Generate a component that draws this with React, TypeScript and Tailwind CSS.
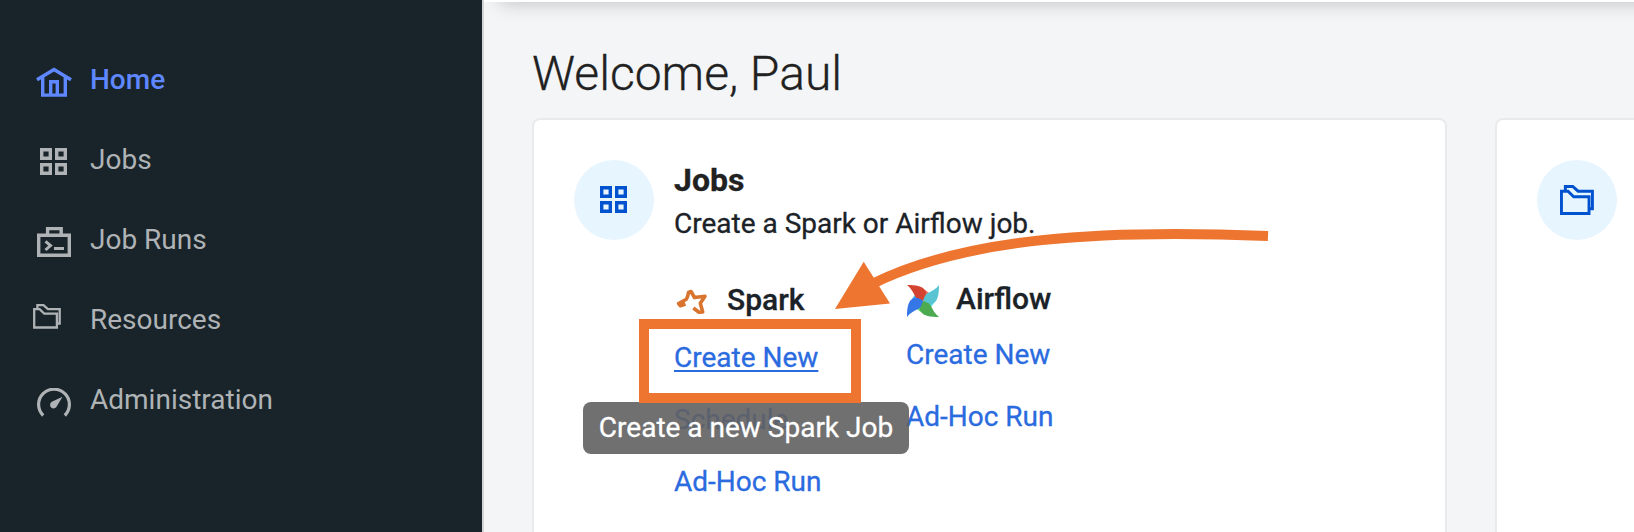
import type { ReactNode } from "react";

const squares = "M1.7 1.7h8.6v8.6h-8.6zM16.7 1.7h8.6v8.6h-8.6zM1.7 16.7h8.6v8.6h-8.6zM16.7 16.7h8.6v8.6h-8.6z";

function HomeIcon() {
  return (
    <svg className="shrink-0" width="36" height="32" viewBox="0 0 36 32" fill="none" stroke="currentColor" strokeWidth="3.4">
      <path d="M1 13.8 18 3.5l17 10.3M6.7 10.5v18.6h22.6V10.5M14.7 28V15.7h6.6V28" />
    </svg>
  );
}

function GridIcon() {
  return (
    <svg className="shrink-0" width="27" height="27" viewBox="0 0 27 27" fill="none" stroke="currentColor" strokeWidth="3.4">
      <path d={squares} />
    </svg>
  );
}

function RunsIcon() {
  return (
    <svg className="shrink-0" width="34" height="30" viewBox="0 0 34 30" fill="none" stroke="currentColor" strokeWidth="3.4">
      <path d="M1.7 8.3h30.6v20H1.7zM10.6 8V1.6h13.6V8" />
      <path d="M8.5 14.3 13.5 18.5 8.5 23M17 21.6h10" strokeWidth="3" />
    </svg>
  );
}

function FolderIcon({ size = 28, stroke = 2.3 }: { size?: number; stroke?: number }) {
  return (
    <svg className="shrink-0" width={size} height={size * 0.893} viewBox="0 0 28 25" fill="none" stroke="currentColor" strokeWidth={stroke}>
      <path d="M1.2 5.1h5.4l4.7 4.6h12.6v13.8H1.2zM4.4 5V1.2h6.1l4.4 3.9h11.8v14.4h-2.9" />
    </svg>
  );
}

function GaugeIcon() {
  return (
    <svg className="shrink-0" width="34" height="30" viewBox="0 0 34 30" fill="none" stroke="currentColor" strokeWidth="3.2">
      <path d="M6.2 27.5a15.4 15.4 0 1 1 21.6 0" />
      <path d="M25.5 8.8 20 18.1a3.6 3.6 0 1 1-4.7-4.6z" fill="currentColor" stroke="none" />
    </svg>
  );
}

function SparkIcon() {
  return (
    <svg className="shrink-0" width="34" height="32" viewBox="0 0 34 32" fill="none" stroke="#d9742f" strokeWidth="3.6" strokeLinejoin="round">
      <path d="M11.5 20 6.5 21.8 4.6 19.5 12 15.5Q13.5 14 14.5 8.5L17 7.5 20.5 13.5 31 12.2 26.3 19.3 28.7 28 25 28.3 19.3 24" />
    </svg>
  );
}

const blades = [
  { turn: "rotate(0 16 16)", main: "#d4432f", light: "#f0725f" },
  { turn: "rotate(90 16 16)", main: "#59c5d3", light: "#62dcea" },
  { turn: "rotate(180 16 16)", main: "#4caa51", light: "#5dd66a" },
  { turn: "rotate(270 16 16)", main: "#3577e6", light: "#49aaf5" },
];

function AirflowIcon() {
  return (
    <svg className="mt-1 shrink-0" width="32" height="32" viewBox="0 0 32 32">
      {blades.map((b) => (
        <path key={b.light} transform={b.turn} d="M18 5Q23 8 22.7 10Q21 14 16 16z" fill={b.light} />
      ))}
      {blades.map((b) => (
        <path key={b.main} transform={b.turn} d="M0 0C9 0 15 1 18 5C20 8 19.500 12 16 16C12 14.500 9 14 8 11C6 7 4 3 0 0z" fill={b.main} />
      ))}
    </svg>
  );
}

function NavItem({ icon, label, active = false, shift = "justify-center pt-1 pr-[14px]" }: { icon: ReactNode; label: string; active?: boolean; shift?: string }) {
  return (
    <a className={`flex h-20 items-center ${active ? "font-medium text-[#5f87ff]" : "text-[#afb3b6]"}`}>
      <span className={`flex w-[58px] shrink-0 ${shift}`}>{icon}</span>
      <span>{label}</span>
    </a>
  );
}

export default function App() {
  return (
    <div className="relative flex h-[532px] w-[1634px] overflow-hidden bg-[#f4f5f7] font-['Roboto',sans-serif] text-[28px] leading-8 text-[#1b2228]">
      <nav className="w-[484px] shrink-0 border-r-2 border-[#d2d5d7] bg-[#182429] pt-10 pl-8">
        <NavItem icon={<HomeIcon />} label="Home" active />
        <NavItem icon={<GridIcon />} label="Jobs" shift="justify-center pt-[3px] pr-[15px]" />
        <NavItem icon={<RunsIcon />} label="Job Runs" />
        <NavItem icon={<FolderIcon />} label="Resources" shift="pb-2 pl-px" />
        <NavItem icon={<GaugeIcon />} label="Administration" shift="justify-center pt-1.5 pr-[14px]" />
      </nav>
      <main className="min-w-0 grow [-webkit-text-stroke:0.3px]">
        <div className="-mt-[58px] -mr-12 h-[60px] bg-white shadow-[0_16px_20px_-16px_rgba(0,0,0,0.24)]" />
        <h1 className="pt-[44px] pl-12 text-[48px] leading-[56px] font-light text-[#212121]">Welcome, Paul</h1>
        <div className="flex gap-12 pt-4 pl-12">
          <section className="flex h-[440px] w-[915px] shrink-0 gap-5 rounded-lg border-2 border-[#e9eaeb] bg-white p-10">
            <span className="flex size-20 shrink-0 items-center justify-center rounded-full bg-[#e7f5ff] pr-px pb-px text-[#0052ce]">
              <GridIcon />
            </span>
            <div>
              <h2 className="pt-0.5 text-[32px] leading-9 font-bold text-[#212121]">Jobs</h2>
              <p className="pt-[10px]">Create a Spark or Airflow job.</p>
              <div className="flex pt-11 text-[#2b6be0]">
                <div className="flex w-[232px] flex-col">
                  <h3 className="flex h-8 items-center gap-[19px] text-[30px] font-medium text-[#1b2228]">
                    <SparkIcon />
                    Spark
                  </h3>
                  <a className="pt-[26px] underline decoration-2 underline-offset-[3px]">Create New</a>
                  <a className="pt-[30px]">Schedule</a>
                  <a className="pt-[30px]">Ad-Hoc Run</a>
                </div>
                <div className="-mt-px flex flex-col">
                  <h3 className="flex h-8 items-center gap-[17px] pl-px text-[30px] font-medium text-[#1b2228]">
                    <AirflowIcon />
                    Airflow
                  </h3>
                  <a className="pt-6">Create New</a>
                  <a className="pt-[30px]">Ad-Hoc Run</a>
                </div>
              </div>
            </div>
          </section>
          <section className="h-[440px] w-[915px] shrink-0 rounded-lg border-2 border-[#e9eaeb] bg-white p-10">
            <span className="flex size-20 items-center justify-center rounded-full bg-[#e7f5ff] text-[#0052ce]">
              <FolderIcon size={34} stroke={2.4} />
            </span>
          </section>
        </div>
      </main>
      <div className="absolute top-[402px] left-[583px] flex h-[52px] w-[326px] items-center justify-center rounded-lg bg-[#616161]/90 text-white [-webkit-text-stroke:0.3px]">
        Create a new Spark Job
      </div>
      <div className="absolute top-[319px] left-[639px] h-[84px] w-[222px] border-10 border-[#ed752f]" />
      <svg className="absolute top-[220px] left-[830px]" width="450" height="100" viewBox="830 220 450 100" fill="none">
        <path d="M1268 236C1100 229 965 238 872 284" stroke="#ed752f" strokeWidth="10" />
        <path d="M835 309 863.7 261.7 890 303.5z" fill="#ed752f" />
      </svg>
    </div>
  );
}
